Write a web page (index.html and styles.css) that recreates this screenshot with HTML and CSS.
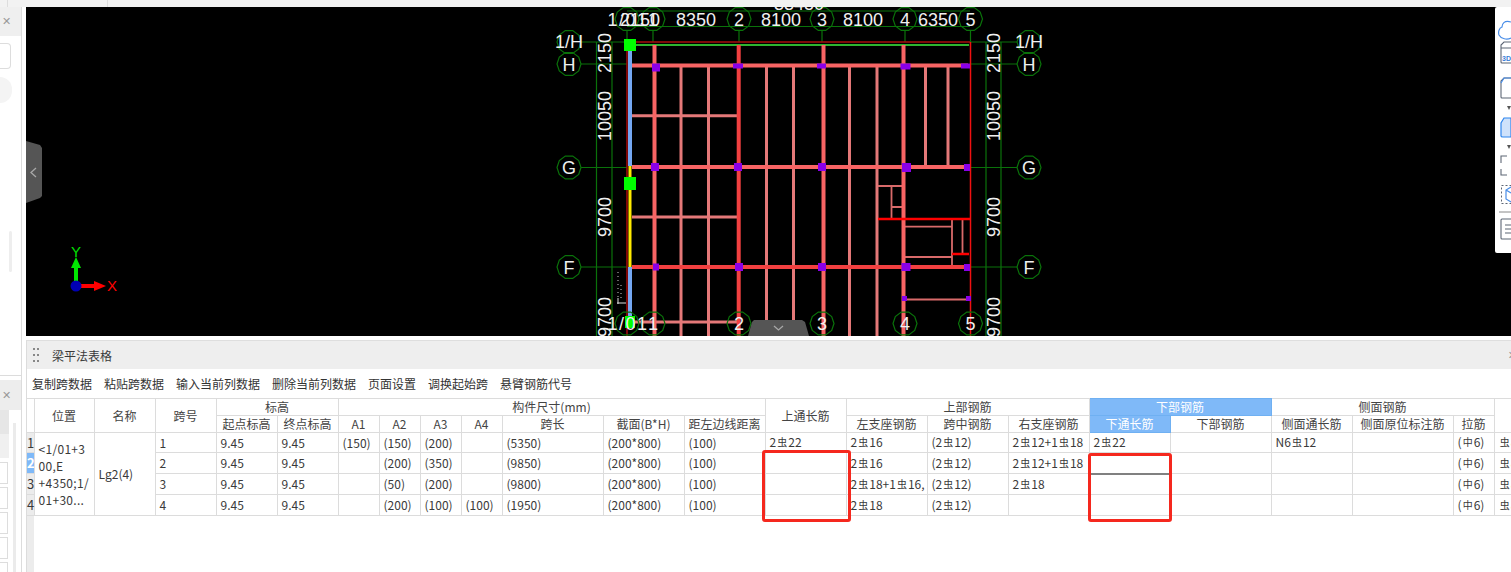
FILE: index.html
```html
<!DOCTYPE html>
<html lang="zh">
<head>
<meta charset="utf-8">
<title>梁平法表格</title>
<link rel="stylesheet" href="styles.css">
</head>
<body>
<div class="app">
  <aside class="side">
    <div class="side-cap"><i class="tick tick-c"></i></div>
    <div class="side-top">
      <div class="side-head"><span class="close">✕</span></div>
      <div class="side-btn"></div>
      <div class="side-round"></div>
      <div class="side-pill"></div>
    </div>
    <div class="side-bottom">
      <div class="side-head"><span class="close">✕</span></div>
      <div class="side-body">
        <div class="side-list">
          <div class="tab tab-a"></div>
          <div class="tab tab-b"></div>
          <div class="slot"></div>
          <div class="slot"></div>
          <div class="slot"></div>
          <div class="slot"></div>
          <div class="slot"></div>
        </div>
        <div class="side-scroll"></div>
      </div>
    </div>
  </aside>

  <main class="main">
    <div class="topbar"><i class="tick tick-a"></i></div>
    <section class="canvas">
      <svg class="drawing" viewBox="26 7 1485 329" width="1485" height="329" xmlns="http://www.w3.org/2000/svg">
        <defs>
          <polygon id="bub" points="12,0 9.7,7 3.7,11.4 -3.7,11.4 -9.7,7 -12,0 -9.7,-7 -3.7,-11.4 3.7,-11.4 9.7,-7" fill="none" stroke="#0a720a" stroke-width="1.2"/>
        </defs>

        <!-- dimension and axis lines -->
        <g class="axis">
          <path d="M627 11H970M627 26.500H970"/>
          <path d="M627 30V42M653 30V42M739 30V42M822 30V42M905 30V42M970.500 30V42"/>
          <path d="M581 42H627M970 42H1017M581 64H627M970 64H1017M581 167.500H627M970 167.500H1017M581 267H627M970 267H1017"/>
          <path d="M596.500 42V336M612 42V336M986 42V336M1001 42V336"/>
        </g>

        <!-- frame -->
        <path class="frame-dark" d="M627 42H970M627 42V336"/>
        <path class="frame-green" d="M630 45H969"/>
        <path class="frame-edge" d="M970.500 42V336"/>

        <!-- secondary beams -->
        <g class="beam-2">
          <path d="M681 66V336M708.500 66V336M766.500 66V336M793.500 66V336M849.500 66V336M877 66V336"/>
          <path d="M632 115.700H738M632 217H738M632 322H738"/>
          <path d="M925.500 66V165M948 66V165"/>
        </g>
        <g class="beam-3">
          <path d="M878 186H903M891.500 186V218M892 207H903M905 226.700H952M952 220V265M962.500 220V253M905 257H952M905 299.500H968"/>
        </g>

        <!-- main beams -->
        <g class="beam-1">
          <path d="M654.500 45V336M823.500 45V336M903.500 45V336"/>
          <path d="M632 65.500H968M632 167H968"/>
          <path class="beam-hot" d="M738.700 45V336M632 267H968"/>
        </g>
        <path class="beam-red" d="M878 219H970M952 254H969"/>

        <!-- selected beam -->
        <path class="sel-blue" d="M630 47V166M630 267V318"/>
        <path class="sel-yellow" d="M630 166V267"/>

        <!-- nodes -->
        <g class="node">
          <rect x="652" y="63.500" width="8" height="8"/><rect x="733" y="63.500" width="10" height="5"/>
          <rect x="817" y="63.500" width="9" height="5"/><rect x="900.500" y="63.500" width="10" height="6"/>
          <rect x="961" y="63.500" width="9" height="5"/><rect x="651" y="163" width="8" height="8"/>
          <rect x="734" y="163" width="8" height="8"/><rect x="818" y="163" width="8" height="8"/>
          <rect x="902" y="163" width="9" height="9"/><rect x="964" y="164" width="6" height="7"/>
          <rect x="653" y="263.500" width="6" height="7"/><rect x="735" y="263" width="8" height="8"/>
          <rect x="818" y="263" width="8" height="8"/><rect x="901.500" y="263" width="9" height="8"/>
          <rect x="964" y="264" width="6" height="7"/><rect x="902" y="296" width="5" height="5"/>
          <rect x="966" y="296" width="5" height="5"/>
        </g>
        <g class="grip">
          <rect x="624" y="39" width="12" height="12"/>
          <rect x="624" y="177" width="12" height="13"/>
          <rect x="625" y="316" width="10" height="12"/>
        </g>
        <path class="specks" d="M618 272V300M621 285V300"/>
        <path class="speck-solid" d="M617 303H626M618 298V304"/>

        <!-- bubbles -->
        <use href="#bub" x="627" y="19"/><use href="#bub" x="653" y="19"/><use href="#bub" x="739" y="19"/>
        <use href="#bub" x="822" y="19"/><use href="#bub" x="905" y="19"/><use href="#bub" x="970.500" y="19"/>
        <use href="#bub" x="569" y="42"/><use href="#bub" x="569" y="64"/><use href="#bub" x="569" y="167.500"/><use href="#bub" x="569" y="267"/>
        <use href="#bub" x="1029" y="42"/><use href="#bub" x="1029" y="64"/><use href="#bub" x="1029" y="167.500"/><use href="#bub" x="1029" y="267"/>
        <use href="#bub" x="627" y="323.500"/><use href="#bub" x="653" y="323.500"/><use href="#bub" x="739" y="323.500"/>
        <use href="#bub" x="822" y="323.500"/><use href="#bub" x="905" y="323.500"/><use href="#bub" x="970.500" y="323.500"/>

        <!-- labels -->
        <g class="lbl">
          <text x="799" y="10">33450</text>
          <text class="ax" x="628" y="26">1/01</text><text x="640" y="26">2150</text><text x="653" y="26">1</text>
          <text x="696" y="26">8350</text><text x="739" y="26">2</text><text x="781" y="26">8100</text>
          <text x="822" y="26">3</text><text x="863" y="26">8100</text><text x="905" y="26">4</text>
          <text x="938" y="26">6350</text><text x="970.500" y="26">5</text>
          <text x="569" y="48">1/H</text><text x="569" y="70.500">H</text><text x="569" y="174">G</text><text x="569" y="273.500">F</text>
          <text x="1029" y="48">1/H</text><text x="1029" y="70.500">H</text><text x="1029" y="174">G</text><text x="1029" y="273.500">F</text>
          <text class="ax" x="628" y="330">1/01</text><text x="653" y="330">1</text><text x="739" y="330">2</text>
          <text x="822" y="330">3</text><text x="905" y="330">4</text><text x="970.500" y="330">5</text>
          <text transform="translate(611 53) rotate(-90)">2150</text>
          <text transform="translate(611 116) rotate(-90)">10050</text>
          <text transform="translate(611 217) rotate(-90)">9700</text>
          <text transform="translate(611 317) rotate(-90)">9700</text>
          <text transform="translate(1000 53) rotate(-90)">2150</text>
          <text transform="translate(1000 116) rotate(-90)">10050</text>
          <text transform="translate(1000 217) rotate(-90)">9700</text>
          <text transform="translate(1000 317) rotate(-90)">9700</text>
        </g>

        <!-- axis gizmo -->
        <path class="giz-g" d="M76 284V267"/>
        <polygon class="giz-gf" points="76,257 81,268 71,268"/>
        <path class="giz-r" d="M80 286H95"/>
        <polygon class="giz-rf" points="106,286 94,281 94,291"/>
        <circle class="giz-b" cx="76" cy="286" r="5.500"/>
        <text class="giz-ty" x="76" y="257">Y</text>
        <text class="giz-tx" x="112" y="291">X</text>

        <!-- collapse handles -->
        <polygon class="handle" points="26,141 40,145 42,148 42,196 40,198 26,203"/>
        <path class="chev" d="M36 168L31 172.500L36 177"/>
        <polygon class="handle" points="748,336 752,322 754,320 802,320 805,322 809,336"/>
        <path class="chev" d="M774 326L778.500 330L783 326"/>
      </svg>

      <div class="tools">
        <svg width="16" height="246" viewBox="0 0 16 246" xmlns="http://www.w3.org/2000/svg">
          <path class="t-blue" d="M16 15C9 13 7 17 7 20C4 21 3 25 4 28C6 32 12 33 16 31"/>
          <path class="t-grey" d="M16 35H9L6 38V55C6 56 7 56 7 56H16"/>
          <path class="t-grey" d="M6 41H16"/>
          <text class="t-3d" x="7" y="54">3D</text>
          <path class="t-grey" d="M16 71H9L6 74V90C6 91 7 91 7 91H16"/>
          <path class="t-blue" d="M6 76L9 71H16"/>
          <polygon class="t-mark" points="12,99 16,99 14,103"/>
          <path class="t-fill" d="M16 111H9L6 116V129C6 130 7 130 8 130H16Z"/>
          <polygon class="t-mark" points="12,138 16,138 14,142"/>
          <path class="t-grey" d="M12 149H6V156M6 162V168H12"/>
          <rect class="t-dash" x="6.500" y="178.500" width="14" height="18"/>
          <path class="t-blue" d="M16 180L11 183V192L16 195M11 183L16 186"/>
          <path class="t-line" d="M4 205H16"/>
          <path class="t-grey" d="M16 212H7C6 212 6 212 6 213V231C6 232 6 232 7 232H16"/>
          <path class="t-grey" d="M10 218H16M10 222H16M10 226H16"/>
        </svg>
      </div>
    </section>

    <div class="gap"></div>

    <section class="panel">
      <header class="panel-title">
        <span class="dots"><i></i><i></i><i></i><i></i><i></i><i></i></span>
        <span class="panel-name">梁平法表格</span>
        <span class="panel-close">✕</span>
      </header>
      <nav class="toolbar">
        <span>复制跨数据</span><span>粘贴跨数据</span><span>输入当前列数据</span><span>删除当前列数据</span><span>页面设置</span><span>调换起始跨</span><span>悬臂钢筋代号</span>
      </nav>
      <div class="grid-wrap">
        <table class="grid">
          <colgroup>
            <col class="w7"><col class="w60"><col class="w61"><col class="w61"><col class="w61"><col class="w61">
            <col class="w41"><col class="w41"><col class="w41"><col class="w41"><col class="w101"><col class="w81"><col class="w81">
            <col class="w81"><col class="w81"><col class="w81"><col class="w81"><col class="w81"><col class="w101"><col class="w81"><col class="w101"><col class="w41"><col class="w40">
          </colgroup>
          <thead>
            <tr>
              <th rowspan="2" class="corner"></th>
              <th rowspan="2">位置</th><th rowspan="2">名称</th><th rowspan="2">跨号</th>
              <th colspan="2">标高</th><th colspan="7">构件尺寸(mm)</th>
              <th rowspan="2">上通长筋</th><th colspan="3">上部钢筋</th>
              <th colspan="2" class="hl">下部钢筋</th><th colspan="3">侧面钢筋</th><th rowspan="2"></th>
            </tr>
            <tr>
              <th>起点标高</th><th>终点标高</th><th>A1</th><th>A2</th><th>A3</th><th>A4</th><th>跨长</th><th>截面(B*H)</th><th>距左边线距离</th>
              <th>左支座钢筋</th><th>跨中钢筋</th><th>右支座钢筋</th><th class="hl">下通长筋</th><th>下部钢筋</th>
              <th>侧面通长筋</th><th>侧面原位标注筋</th><th>拉筋</th>
            </tr>
          </thead>
          <tbody>
            <tr>
              <td class="no">1</td>
              <td rowspan="4" class="loc">&lt;1/01+3<br>00,E<br>+4350;1/<br>01+30...</td>
              <td rowspan="4">Lg2(4)</td>
              <td>1</td><td>9.45</td><td>9.45</td><td>(150)</td><td>(150)</td><td>(200)</td><td></td><td>(5350)</td><td>(200*800)</td><td>(100)</td>
              <td>2<b>虫</b>22</td><td>2<b>虫</b>16</td><td>(2<b>虫</b>12)</td><td>2<b>虫</b>12+1<b>虫</b>18</td><td>2<b>虫</b>22</td><td></td>
              <td>N6<b>虫</b>12</td><td></td><td>(<b>中</b>6)</td><td><b>虫</b><em>8@100</em></td>
            </tr>
            <tr>
              <td class="no cur">2</td>
              <td>2</td><td>9.45</td><td>9.45</td><td></td><td>(200)</td><td>(350)</td><td></td><td>(9850)</td><td>(200*800)</td><td>(100)</td>
              <td></td><td>2<b>虫</b>16</td><td>(2<b>虫</b>12)</td><td>2<b>虫</b>12+1<b>虫</b>18</td><td class="editing"></td><td></td>
              <td></td><td></td><td>(<b>中</b>6)</td><td><b>虫</b><em>8@100</em></td>
            </tr>
            <tr>
              <td class="no">3</td>
              <td>3</td><td>9.45</td><td>9.45</td><td></td><td>(50)</td><td>(200)</td><td></td><td>(9800)</td><td>(200*800)</td><td>(100)</td>
              <td></td><td>2<b>虫</b>18+1<b>虫</b>16,</td><td>(2<b>虫</b>12)</td><td>2<b>虫</b>18</td><td></td><td></td>
              <td></td><td></td><td>(<b>中</b>6)</td><td><b>虫</b><em>8@100</em></td>
            </tr>
            <tr>
              <td class="no">4</td>
              <td>4</td><td>9.45</td><td>9.45</td><td></td><td>(200)</td><td>(100)</td><td>(100)</td><td>(1950)</td><td>(200*800)</td><td>(100)</td>
              <td></td><td>2<b>虫</b>18</td><td>(2<b>虫</b>12)</td><td></td><td></td><td></td>
              <td></td><td></td><td>(<b>中</b>6)</td><td><b>虫</b><em>8@100</em></td>
            </tr>
          </tbody>
        </table>
        <div class="mark mark-a"></div>
        <div class="mark mark-b"></div>
      </div>
    </section>
  </main>
</div>
</body>
</html>
```
FILE: styles.css
```css
* { box-sizing: border-box; }
html, body { margin: 0; height: 100%; }
body {
  width: 1511px;
  height: 572px;
  overflow: hidden;
  background: #fff;
  font: 12px/17px "Noto Sans CJK SC", "Liberation Sans", sans-serif;
  color: #3a3a3a;
}
.app { display: flex; width: 1511px; height: 572px; }

/* left sidebar */
.side {
  width: 26px;
  flex: none;
  display: flex;
  flex-direction: column;
  background: #fff;
}
.side-cap { position: relative; height: 7px; flex: none; background: #f2f2f2; }
.side-top {
  width: 22px;
  height: 369px;
  flex: none;
  background: #fff;
  border-right: 1px solid #dcdcdc;
  border-bottom: 1px solid #dcdcdc;
}
.side-head {
  height: 29px;
  background: #efefef;
  display: flex;
  align-items: center;
  padding-left: 2px;
}
.close { color: #999; font-size: 11px; font-family: "DejaVu Sans", sans-serif; }
.side-btn {
  width: 11px;
  height: 26px;
  margin-top: 7px;
  border: 1px solid #ddd;
  border-left: 0;
  border-radius: 0 4px 4px 0;
}
.side-round {
  width: 12px;
  height: 26px;
  margin-top: 8px;
  background: #f4f4f4;
  border-radius: 0 13px 13px 0;
}
.side-pill {
  width: 3px;
  height: 41px;
  margin: 128px 0 0 9px;
  background: #eee;
  border-radius: 2px;
}
.side-bottom {
  width: 22px;
  flex: 1;
  padding-top: 4px;
  background: #fff;
  border-right: 1px solid #dcdcdc;
}
.side-bottom .side-head { height: 30px; background: #ededed; }
.side-body { display: flex; height: 170px; }
.side-list { width: 13px; flex: none; }
.tab { width: 9px; height: 24px; }
.tab-a { background: #e6e6e6; }
.tab-b { background: #f0f0f0; }
.slot {
  width: 8px;
  height: 22px;
  margin-top: 3px;
  background: #fff;
  border: 1px solid #ddd;
  border-left: 0;
}
.tab-b + .slot { margin-top: 4px; }
.side-scroll { width: 3px; margin-top: 13px; background: #ebebeb; }

/* main column */
.main {
  flex: 1;
  min-width: 0;
  display: flex;
  flex-direction: column;
  overflow: hidden;
}
.topbar { position: relative; height: 7px; flex: none; background: #f2f2f2; }
.tick { position: absolute; top: 0; width: 1px; height: 7px; background: #ddd; }
.tick-a { left: 81px; }
.tick-c { left: 7px; }
.canvas { position: relative; flex: none; height: 329px; background: #000; overflow: hidden; }
.drawing { display: block; }
.gap { flex: none; height: 4px; background: #fff; }

.axis { fill: none; stroke: #0a720a; stroke-width: 1.200; }
.frame-dark { fill: none; stroke: #a80d0d; stroke-width: 1.500; }
.frame-green { fill: none; stroke: #2fb52f; stroke-width: 2; }
.frame-edge { fill: none; stroke: #f01010; stroke-width: 1.500; }
.beam-1 { fill: none; stroke: #f86464; stroke-width: 4; }
.beam-hot { stroke: #f24040; }
.beam-2 { fill: none; stroke: #e47878; stroke-width: 3; }
.beam-3 { fill: none; stroke: #d96a6a; stroke-width: 1.800; }
.beam-red { fill: none; stroke: #ff0000; stroke-width: 2.500; }
.sel-blue { fill: none; stroke: #74a7f2; stroke-width: 4; }
.sel-yellow { fill: none; stroke: #ffea00; stroke-width: 3; }
.node { fill: #8a00e8; }
.grip { fill: #00ff00; }
.specks { fill: none; stroke: #ccc; stroke-width: 1; stroke-dasharray: 1 3; }
.speck-solid { fill: none; stroke: #ddd; stroke-width: 1; }
.lbl text {
  font: 18px "Liberation Sans", sans-serif;
  fill: #f0f0f0;
  text-anchor: middle;
}
.lbl text.ax { letter-spacing: 1.500px; }
.giz-g { fill: none; stroke: #00e600; stroke-width: 4; }
.giz-gf { fill: #00e600; }
.giz-r { fill: none; stroke: #ff0000; stroke-width: 4; }
.giz-rf { fill: #ff0000; }
.giz-b { fill: #0000b4; }
.giz-ty { font: 15px "Liberation Sans", sans-serif; fill: #00e000; text-anchor: middle; }
.giz-tx { font: 15px "Liberation Sans", sans-serif; fill: #ff0000; text-anchor: middle; }
.handle { fill: #555; }
.chev { fill: none; stroke: #a8a8a8; stroke-width: 1.300; }

/* right tool strip */
.tools {
  position: absolute;
  top: 0;
  right: 0;
  width: 16px;
  height: 246px;
  background: #fff;
  border-radius: 2px 0 0 2px;
  overflow: hidden;
}
.tools svg { display: block; }
.t-blue { fill: none; stroke: #4a8ee8; stroke-width: 1.200; }
.t-grey { fill: none; stroke: #5d6675; stroke-width: 1.100; }
.t-fill { fill: #cfe2fb; stroke: #2f86ee; stroke-width: 1.200; }
.t-mark { fill: #555; }
.t-line { fill: none; stroke: #888; stroke-width: 1; }
.t-dash { fill: none; stroke: #5d6675; stroke-width: 1; stroke-dasharray: 2 2; }
.t-3d { font: bold 7px "Liberation Sans", sans-serif; fill: #3a80d8; }

/* bottom panel */
.panel { flex: 1; min-height: 0; border-left: 1px solid #dcdcdc; background: #fff; }
.panel-title {
  height: 29px;
  display: flex;
  align-items: center;
  background: #eeeeee;
  border-top: 1px solid #dedede;
  padding-left: 6px;
  position: relative;
}
.dots { display: grid; grid-template-columns: 2px 2px; gap: 4px 2px; }
.dots i { width: 2px; height: 2px; background: #888; display: block; }
.panel-name { margin-left: 13px; }
.panel-close { position: absolute; right: -6px; top: 6px; color: #999; font-size: 11px; font-family: "DejaVu Sans", sans-serif; }
.toolbar {
  height: 29px;
  display: flex;
  align-items: center;
  gap: 12px;
  padding: 0 0 1px 5px;
  color: #333;
  white-space: nowrap;
}
.grid-wrap {
  position: relative;
  height: 174px;
  background: linear-gradient(#ececec, #ececec) left top / 7px 100% no-repeat;
}
.grid {
  table-layout: fixed;
  width: 1507px;
  border-collapse: collapse;
  background: #fff;
}
.w7 { width: 7px; } .w40 { width: 40px; } .w41 { width: 41px; } .w60 { width: 60px; }
.w61 { width: 61px; } .w81 { width: 81px; } .w101 { width: 101px; }
.grid th, .grid td {
  border: 1px solid #dcdcdc;
  padding: 0 4px;
  overflow: hidden;
  white-space: nowrap;
  font-weight: 400;
  line-height: 16px;
}
.grid th { height: 17px; text-align: center; padding: 0; color: #444; }
.grid td { height: 21px; }
.grid tbody tr:first-child td { height: 20px; }
.grid th.hl { background: #7fb9f8; color: #fff; border-color: #6fb0f2; }
.grid th.corner { background: #fff; border-left: 0; }
.grid td.no {
  padding: 0;
  font-size: 13px;
  background: #ececec;
  border-left: 0;
  overflow: visible;
}
.grid td.cur { background: #7fb9f8; color: #fff; font-weight: 700; }
.grid td.loc { white-space: normal; line-height: 17px; padding: 0 4px 0 4px; letter-spacing: .3px; }
.grid td.editing { border-bottom: 2px solid #808080; }
.grid b { font-weight: 400; font-size: 10px; padding: 0 1px; position: relative; top: -1px; }
.grid em { font-style: normal; color: #e09a2b; }
.mark { position: absolute; border: 3px solid #f5281e; border-radius: 3px; pointer-events: none; }
.mark-a { left: 735px; top: 52px; width: 89px; height: 72px; }
.mark-b { left: 1061px; top: 55px; width: 84px; height: 69px; }
```
